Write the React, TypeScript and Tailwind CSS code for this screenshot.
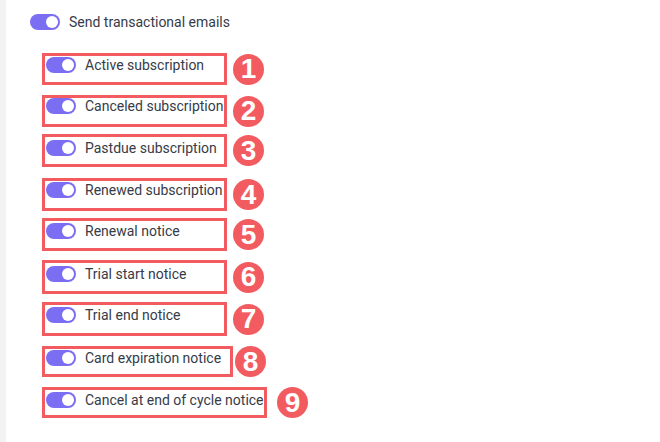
import React from "react";

type Row = {
  label: string;
  n: string;
  box: string;
  badgeGap: string;
};

const rows: Row[] = [
  { label: "Active subscription", n: "1", box: "mt-[23px] h-[32px] w-[185px] pt-[1px]", badgeGap: "ml-[6px]" },
  { label: "Canceled subscription", n: "2", box: "mt-[10px] h-[32px] w-[185px] pt-[0px]", badgeGap: "ml-[6px]" },
  { label: "Pastdue subscription", n: "3", box: "mt-[7px] h-[33px] w-[185px] pt-[3px]", badgeGap: "ml-[6px]" },
  { label: "Renewed subscription", n: "4", box: "mt-[11px] h-[33px] w-[185px] pt-[1px]", badgeGap: "ml-[6px]" },
  { label: "Renewal notice", n: "5", box: "mt-[7px] h-[33px] w-[185px] pt-[2px]", badgeGap: "ml-[6px]" },
  { label: "Trial start notice", n: "6", box: "mt-[9px] h-[34px] w-[185px] pt-[3px]", badgeGap: "ml-[6px]" },
  { label: "Trial end notice", n: "7", box: "mt-[8px] h-[34px] w-[185px] pt-[2px]", badgeGap: "ml-[6px]" },
  { label: "Card expiration notice", n: "8", box: "mt-[10px] h-[31px] w-[191px] pt-[1px]", badgeGap: "ml-[2px]" },
  { label: "Cancel at end of cycle notice", n: "9", box: "mt-[10px] h-[31px] w-[225px] pt-[2px]", badgeGap: "ml-[10px]" },
];

function Toggle() {
  return (
    <span className="flex h-[16px] w-[30px] shrink-0 items-center justify-end rounded-full bg-[#7c6ef2] pr-[2px]">
      <span className="h-[12px] w-[12px] rounded-full bg-white" />
    </span>
  );
}

export default function App() {
  return (
    <div className="flex h-[442px] w-[660px] bg-white font-['Roboto',sans-serif] text-[14px] font-normal text-[#363b47]">
      <div className="w-[6px] shrink-0 bg-[#f3f3f3]" />
      <div className="flex flex-col pl-[24px] pt-[14px]">
        <div className="flex h-[16px] items-center gap-[9px]">
          <Toggle />
          <span className="leading-[16px]">Send transactional emails</span>
        </div>
        <div className="ml-[12px] flex flex-col">
          {rows.map((r) => (
            <div key={r.n} className="flex items-center">
              <div className={`box-border border-[3px] border-[#f25c60] pl-[1px] ${r.box}`}>
                <div className="flex h-[16px] items-center gap-[9px]">
                  <Toggle />
                  <span className="whitespace-nowrap leading-[16px]">{r.label}</span>
                </div>
              </div>
              <div
                className={`flex h-[31px] w-[31px] shrink-0 items-center justify-center rounded-full bg-[#f25c60] font-['Liberation_Sans',sans-serif] text-[28px] font-bold leading-none text-white ${r.badgeGap} ${r.box.split(" ")[0]}`}
              >
                {r.n}
              </div>
            </div>
          ))}
        </div>
      </div>
    </div>
  );
}
